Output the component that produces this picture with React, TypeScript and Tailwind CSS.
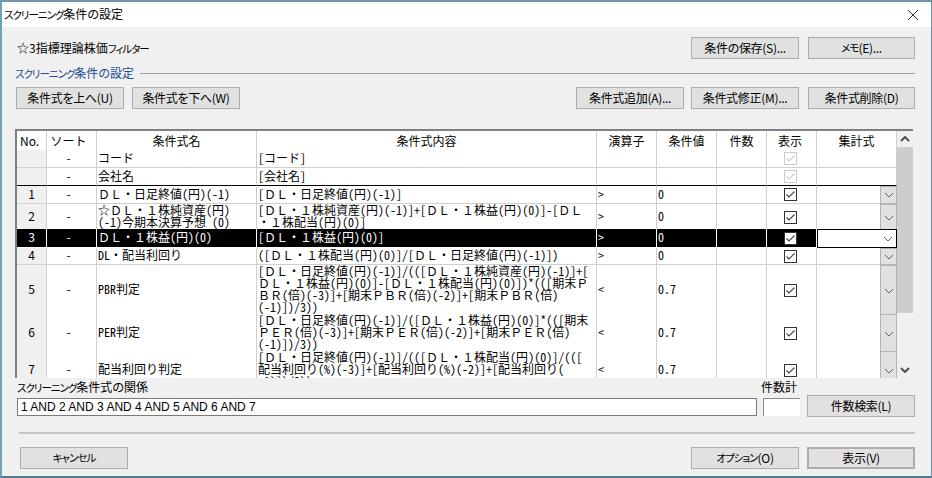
import React from "react";

const K = ({ children }: { children: React.ReactNode }) => (
  <span className="text-[10.5px] tracking-[-1px]">{children}</span>
);

// ASCII runs are set half-width, as in the grid font of the reference; line breaks are kept
const T = ({ s }: { s: string }) => (
  <>
    {s.split("\n").map((line, i) => (
      <React.Fragment key={i}>
        {i > 0 && <br />}
        {line.split(/([\x20-\x7e]+)/).map((part, j) =>
          j % 2 === 1 ? (
            <span key={j} className="whitespace-pre [font-feature-settings:'hwid']">{part}</span>
          ) : (
            <React.Fragment key={j}>{part}</React.Fragment>
          )
        )}
      </React.Fragment>
    ))}
  </>
);

const Btn = ({ className = "", children }: { className?: string; children: React.ReactNode }) => (
  <div className={`flex h-[22px] shrink-0 items-center justify-center border border-[#adadad] bg-[#e1e1e1] text-[12px] tracking-[-0.3px] text-black [font-feature-settings:'palt'] ${className}`}>
    {children}
  </div>
);

const Check = ({ disabled = false }: { disabled?: boolean }) => (
  <svg width="13" height="13" viewBox="0 0 13 13" className="block">
    <rect x="0.5" y="0.5" width="12" height="12" fill="#fff" stroke={disabled ? "#cccccc" : "#333333"} />
    <path d="M2.5 6.5 L5 9 L10.5 3.5" fill="none" stroke={disabled ? "#cccccc" : "#444444"} strokeWidth="1.1" />
  </svg>
);

const Chevron = ({ up = false, bold = false }: { up?: boolean; bold?: boolean }) => (
  <svg width="10" height="6" viewBox="0 0 10 6" className="block">
    <path
      d={up ? "M1 5 L5 1 L9 5" : "M1 1 L5 5 L9 1"}
      fill="none"
      stroke={bold ? "#505050" : "#606060"}
      strokeWidth={bold ? 2 : 1}
    />
  </svg>
);

type Row = {
  no: string;
  name: string;
  content: string;
  op: string;
  val: string;
  h: string;
  sel?: boolean;
  fixed?: boolean;
  line?: string;
};

const rows: Row[] = [
  { no: "", name: "コード", content: "[コード]", op: "", val: "", h: "h-[18px]", fixed: true },
  { no: "", name: "会社名", content: "[会社名]", op: "", val: "", h: "h-[18px]", fixed: true, line: "border-b-black" },
  { no: "1", name: "ＤＬ・日足終値(円)(-1)", content: "[ＤＬ・日足終値(円)(-1)]", op: ">", val: "0", h: "h-[18px]" },
  {
    no: "2",
    name: "☆ＤＬ・１株純資産(円)\n(-1)今期本決算予想 (0)",
    content: "[ＤＬ・１株純資産(円)(-1)]+[ＤＬ・１株益(円)(0)]-[ＤＬ\n・１株配当(円)(0)]",
    op: ">", val: "0", h: "h-[25px]",
  },
  { no: "3", name: "ＤＬ・１株益(円)(0)", content: "[ＤＬ・１株益(円)(0)]", op: ">", val: "0", h: "h-[19px]", sel: true },
  { no: "4", name: "DL・配当利回り", content: "([ＤＬ・１株配当(円)(0)]/[ＤＬ・日足終値(円)(-1)])", op: ">", val: "0", h: "h-[17px]" },
  {
    no: "5",
    name: "PBR判定",
    content: "[ＤＬ・日足終値(円)(-1)]/(([ＤＬ・１株純資産(円)(-1)]+[\nＤＬ・１株益(円)(0)]-[ＤＬ・１株配当(円)(0)])*(([期末Ｐ\nＢＲ(倍)(-3)]+[期末ＰＢＲ(倍)(-2)]+[期末ＰＢＲ(倍)\n(-1)])/3))",
    op: "<", val: "0.7", h: "h-[49px]",
  },
  {
    no: "6",
    name: "PER判定",
    content: "[ＤＬ・日足終値(円)(-1)]/([ＤＬ・１株益(円)(0)]*(([期末\nＰＥＲ(倍)(-3)]+[期末ＰＥＲ(倍)(-2)]+[期末ＰＥＲ(倍)\n(-1)])/3))",
    op: "<", val: "0.7", h: "h-[37px]",
  },
  {
    no: "7",
    name: "配当利回り判定",
    content: "[ＤＬ・日足終値(円)(-1)]/(([ＤＬ・１株配当(円)(0)]/(([\n配当利回り(%)(-3)]+[配当利回り(%)(-2)]+[配当利回り(\n-1)])/3))",
    op: "<", val: "0.7", h: "h-[37px]",
  },
];

const cols = "grid grid-cols-[30px_50px_160px_340px_60px_60px_50px_50px_80px]";

const HeadCell = ({ children, className = "" }: { children?: React.ReactNode; className?: string }) => (
  <div className={`flex items-center justify-center border-r border-[#cfcfcf] ${className}`}>{children}</div>
);

const TableRow = ({ r }: { r: Row }) => {
  const cell = `flex items-center border-r border-b ${r.sel ? "border-white" : "border-[#cfcfcf]"} ${r.line ?? ""}`;
  return (
    <div className={`${cols} ${r.h} shrink-0 ${r.sel ? "bg-black text-white" : "bg-white text-black"}`}>
      <div className={`${cell} justify-center pb-[2px] ${r.sel ? "" : "bg-[#f0f0f0]"}`}>{r.no}</div>
      <div className={`${cell} justify-center pr-[6px] pb-[2px]`}>-</div>
      <div className={`${cell} whitespace-nowrap pb-[2px] pl-[1px]`}><div><T s={r.name} /></div></div>
      <div className={`${cell} whitespace-nowrap pb-[2px] pl-[1px]`}><div><T s={r.content} /></div></div>
      <div className={`${cell} pb-[2px] pl-[1px]`}><T s={r.op} /></div>
      <div className={`${cell} pb-[2px] pl-[1px]`}><T s={r.val} /></div>
      <div className={cell} />
      <div className={`${cell} justify-center pr-[3px]`}><Check disabled={r.fixed} /></div>
      {r.fixed ? (
        <div className={cell} />
      ) : r.sel ? (
        <div className="flex justify-end border border-black bg-white">
          <div className="flex w-[16px] items-center justify-center"><Chevron /></div>
        </div>
      ) : (
        <div className="flex">
          <div className="flex-1 border-b border-[#cfcfcf]" />
          <div className="flex w-[17px] items-center justify-center border border-[#b4b4b4] bg-[#e1e1e1]"><Chevron /></div>
        </div>
      )}
    </div>
  );
};

export default function App() {
  return (
    <div className="flex h-[478px] w-[932px] flex-col overflow-hidden border-t-2 border-r border-b-2 border-l-2 border-t-[#6d96a6] border-r-[#6d96a6] border-b-[#4f7f95] border-l-[#6fa3bb] bg-[#f0f0f0] text-[12px] leading-[12px] text-black [font-family:'Noto_Sans_CJK_JP','Liberation_Sans',sans-serif]">
      <div className="flex h-[25px] shrink-0 items-center justify-between bg-white pr-[12px] pl-[2px]">
        <span className="text-[12px] [font-feature-settings:'palt']"><K>スクリーニング</K>条件の設定</span>
        <svg width="12" height="12" viewBox="0 0 12 12" className="block">
          <path d="M1 1 L11 11 M11 1 L1 11" stroke="#333" strokeWidth="1" fill="none" />
        </svg>
      </div>

      <div className="flex flex-1 flex-col pr-[16px] pl-[13px]">
        <div className="mt-[10px] flex items-center">
          <span className="ml-[2px] text-[12px] [font-feature-settings:'palt']">☆3指標理論株価<K>フィルター</K></span>
          <div className="ml-auto flex gap-[9px]">
            <Btn className="w-[108px]">条件の保存(S)...</Btn>
            <Btn className="w-[107px]"><K>メモ</K>(E)...</Btn>
          </div>
        </div>

        <div className="mt-[7px] flex h-[14px] items-center">
          <span className="text-[#1c4a94] [font-feature-settings:'palt']"><K>スクリーニング</K>条件の設定</span>
          <div className="ml-[6px] h-0 flex-1 border-t border-[#a0a0a0]" />
        </div>

        <div className="mt-[7px] flex">
          <div className="ml-[1px] flex gap-[8px]">
            <Btn className="w-[108px]">条件式を上へ(U)</Btn>
            <Btn className="w-[108px]">条件式を下へ(W)</Btn>
          </div>
          <div className="ml-auto flex gap-[7px]">
            <Btn className="w-[108px]">条件式追加(A)...</Btn>
            <Btn className="w-[108px]">条件式修正(M)...</Btn>
            <Btn className="ml-[2px] w-[107px]">条件式削除(D)</Btn>
          </div>
        </div>

        <div className="mt-[20px] flex h-[249px] w-[898px] shrink-0 overflow-hidden border-t-2 border-l-2 border-[#808080] bg-white">
          <div className="flex w-[880px] shrink-0 flex-col overflow-hidden">
            <div className={`${cols} h-[19px] shrink-0`}>
              <HeadCell className="justify-start! pl-[3px]">No.</HeadCell>
              <HeadCell className="pr-[6px]">ソート</HeadCell>
              <HeadCell>条件式名</HeadCell>
              <HeadCell>条件式内容</HeadCell>
              <HeadCell>演算子</HeadCell>
              <HeadCell>条件値</HeadCell>
              <HeadCell>件数</HeadCell>
              <HeadCell className="pr-[3px]">表示</HeadCell>
              <HeadCell>集計式</HeadCell>
            </div>
            {rows.map((r, i) => (
              <TableRow key={i} r={r} />
            ))}
          </div>
          <div className="flex w-[16px] shrink-0 flex-col bg-[#f0f0f0]">
            <div className="flex h-[16px] shrink-0 items-center justify-center"><Chevron up bold /></div>
            <div className="h-[166px] shrink-0 bg-[#cdcdcd]" />
            <div className="flex-1" />
            <div className="flex h-[16px] shrink-0 items-center justify-center"><Chevron bold /></div>
          </div>
        </div>

        <div className="mt-[3px] flex items-start">
          <div className="ml-[2px] flex w-[740px] flex-col">
            <span className="h-[14px] [font-feature-settings:'palt']"><K>スクリーニング</K>条件式の関係</span>
            <div className="mt-[3px] flex h-[18px] items-center border border-[#7a7a7a] bg-white pl-[3px] [font-family:'Liberation_Sans',sans-serif]">
              1 AND 2 AND 3 AND 4 AND 5 AND 6 AND 7
            </div>
          </div>
          <div className="ml-[6px] flex w-[37px] flex-col">
            <span className="-ml-[2px] h-[14px] whitespace-nowrap">件数計</span>
            <div className="mt-[3px] h-[18px] border-t border-l border-[#8a8a8a] bg-white" />
          </div>
          <Btn className="mt-[14px] ml-[7px] w-[108px]">件数検索(L)</Btn>
        </div>

        <div className="mt-[15px] ml-[4px] h-0 border-t-2 border-[#c4c4c4]" />

        <div className="mt-[13px] ml-[5px] flex">
          <Btn className="w-[108px]"><K>キャンセル</K></Btn>
          <div className="ml-auto flex gap-[8px]">
            <Btn className="w-[108px]"><K>オプション</K>(O)</Btn>
            <Btn className="w-[108px] border-2 border-[#1a6ea8]">表示(V)</Btn>
          </div>
        </div>
      </div>
    </div>
  );
}
